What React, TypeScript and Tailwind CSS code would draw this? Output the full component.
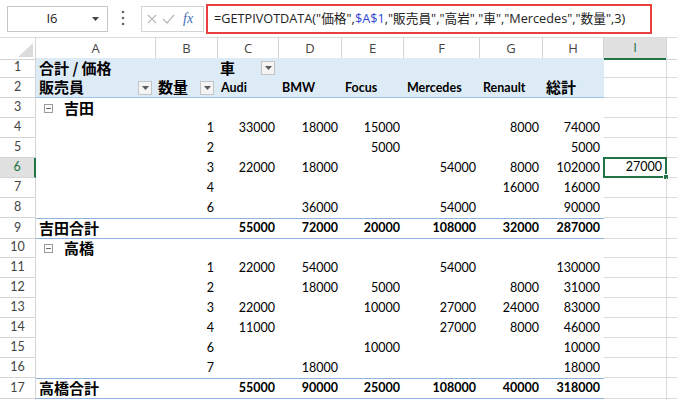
import React from 'react';

const GRID = 'grid grid-cols-[36px_120px_62px_61px_63px_62px_76px_63px_61px_63px_10px]';
const CJK = "relative -top-[1px] text-[15px] font-bold font-['Noto_Sans_CJK_JP',sans-serif] leading-none";

type Row = {
  n: number;
  kind: 'h1' | 'h2' | 'group' | 'data' | 'total';
  a?: string;
  b?: string;
  vals?: string[];
  i?: string;
};

const rows: Row[] = [
  { n: 1, kind: 'h1' },
  { n: 2, kind: 'h2' },
  { n: 3, kind: 'group', a: '吉田' },
  { n: 4, kind: 'data', b: '1', vals: ['33000', '18000', '15000', '', '8000', '74000'] },
  { n: 5, kind: 'data', b: '2', vals: ['', '', '5000', '', '', '5000'] },
  { n: 6, kind: 'data', b: '3', vals: ['22000', '18000', '', '54000', '8000', '102000'], i: '27000' },
  { n: 7, kind: 'data', b: '4', vals: ['', '', '', '', '16000', '16000'] },
  { n: 8, kind: 'data', b: '6', vals: ['', '36000', '', '54000', '', '90000'] },
  { n: 9, kind: 'total', a: '吉田合計', vals: ['55000', '72000', '20000', '108000', '32000', '287000'] },
  { n: 10, kind: 'group', a: '高橋' },
  { n: 11, kind: 'data', b: '1', vals: ['22000', '54000', '', '54000', '', '130000'] },
  { n: 12, kind: 'data', b: '2', vals: ['', '18000', '5000', '', '8000', '31000'] },
  { n: 13, kind: 'data', b: '3', vals: ['22000', '', '10000', '27000', '24000', '83000'] },
  { n: 14, kind: 'data', b: '4', vals: ['11000', '', '', '27000', '8000', '46000'] },
  { n: 15, kind: 'data', b: '6', vals: ['', '', '10000', '', '', '10000'] },
  { n: 16, kind: 'data', b: '7', vals: ['', '18000', '', '', '', '18000'] },
  { n: 17, kind: 'total', a: '高橋合計', vals: ['55000', '90000', '25000', '108000', '40000', '318000'] },
  { n: 18, kind: 'data' },
];

const Dropdown = () => (
  <span className="w-[14px] h-[14px] shrink-0 border border-[#c4c4c4] bg-[#f4f4f4] flex items-center justify-center">
    <svg width="7" height="4" viewBox="0 0 7 4">
      <path d="M0 0h7L3.5 4z" fill="#5a5a5a" />
    </svg>
  </span>
);

const Collapse = () => (
  <span className="w-[9px] h-[9px] shrink-0 border border-[#9a9a9a] flex items-center justify-center">
    <span className="w-[5px] h-px bg-[#666]" />
  </span>
);

function RowNum({ n }: { n: number }) {
  if (n === 6)
    return (
      <div className="flex items-center justify-center bg-[#e1e1e1] text-[#217346] border-b border-b-[#d4d4d4] border-r-2 border-r-[#217346]">
        {n}
      </div>
    );
  return (
    <div className="flex items-center justify-center text-[#444] border-b border-r border-[#d4d4d4]">
      {n <= 17 ? n : ''}
    </div>
  );
}

function PivotCell({ row, children, right }: { row: Row; children?: React.ReactNode; right?: boolean }) {
  let cls = 'flex items-center whitespace-nowrap ';
  cls += right ? 'justify-end pr-[4px] ' : 'pl-[3px] ';
  if (row.kind === 'h1') cls += 'bg-[#ddebf7] ';
  if (row.kind === 'h2') cls += 'bg-[#ddebf7] border-b border-[#9bc2e6] ';
  if (row.kind === 'total') cls += 'border-y border-[#8db3e2] font-bold ';
  if (row.kind === 'h1' || row.kind === 'h2') cls += 'font-bold ';
  return <div className={cls}>{children}</div>;
}

function SheetRow({ row }: { row: Row }) {
  const isPivot = row.n <= 17;
  const cells: React.ReactNode[] = [];
  if (isPivot) {
    if (row.kind === 'h1') {
      cells.push(
        <PivotCell key="a" row={row}>
          <span className={CJK}>合計 / 価格</span>
        </PivotCell>
      );
      cells.push(<PivotCell key="b" row={row} />);
      cells.push(
        <div key="c" className="flex items-center justify-between pl-[2px] pr-[4px] bg-[#ddebf7]">
          <span className={CJK}>車</span>
          <Dropdown />
        </div>
      );
      for (let k = 0; k < 5; k++) cells.push(<PivotCell key={'x' + k} row={row} />);
    } else if (row.kind === 'h2') {
      cells.push(
        <div key="a" className="flex items-center justify-between pl-[3px] pr-[4px] bg-[#ddebf7] border-b border-[#9bc2e6]">
          <span className={CJK}>販売員</span>
          <Dropdown />
        </div>
      );
      cells.push(
        <div key="b" className="flex items-center justify-between pl-[2px] pr-[4px] bg-[#ddebf7] border-b border-[#9bc2e6]">
          <span className={CJK}>数量</span>
          <Dropdown />
        </div>
      );
      ['Audi', 'BMW', 'Focus', 'Mercedes', 'Renault'].forEach((t) =>
        cells.push(
          <PivotCell key={t} row={row}>
            <span className="relative top-[1px]">{t}</span>
          </PivotCell>
        )
      );
      cells.push(
        <PivotCell key="tot" row={row}>
          <span className={CJK}>総計</span>
        </PivotCell>
      );
    } else if (row.kind === 'group') {
      cells.push(
        <div key="a" className="flex items-center pl-[8px] gap-[11px] whitespace-nowrap">
          <Collapse />
          <span className={CJK}>{row.a}</span>
        </div>
      );
      for (let k = 0; k < 7; k++) cells.push(<div key={'g' + k} />);
    } else if (row.kind === 'total') {
      cells.push(
        <PivotCell key="a" row={row}>
          <span className={CJK}>{row.a}</span>
        </PivotCell>
      );
      cells.push(<PivotCell key="b" row={row} />);
      row.vals!.forEach((v, k) =>
        cells.push(
          <PivotCell key={'v' + k} row={row} right>
            {v}
          </PivotCell>
        )
      );
    } else {
      cells.push(<div key="a" />);
      cells.push(
        <PivotCell key="b" row={row} right>
          {row.b}
        </PivotCell>
      );
      row.vals!.forEach((v, k) =>
        cells.push(
          <PivotCell key={'v' + k} row={row} right>
            {v}
          </PivotCell>
        )
      );
    }
  } else {
    for (let k = 0; k < 8; k++) cells.push(<div key={'e' + k} className="border-b border-[#dadada]" />);
  }

  const sel = row.n === 6;
  return (
    <div className={GRID + ' h-[20px]'}>
      <RowNum n={row.n} />
      {cells}
      <div className="relative flex items-center justify-end pr-[4px] border-b border-r border-[#dadada]">
        {row.i}
        {sel && (
          <>
            <div className="absolute -left-[1px] -top-[1px] right-[-1px] bottom-[-1px] border-2 border-[#217346]" />
            <div className="absolute right-[-3px] bottom-[-3px] w-[6px] h-[6px] bg-[#217346] border border-white" />
          </>
        )}
      </div>
      <div className="border-b border-[#dadada]" />
    </div>
  );
}

function FormulaBar() {
  return (
    <div className="relative flex items-center h-[37px] bg-white font-['Open_Sans',sans-serif]">
      <div className="ml-[7px] w-[101px] h-[26px] border border-[#c6c6c6] flex items-center">
        <span className="flex-1 text-center text-[13px] text-[#222] pl-[4px]">I6</span>
        <svg width="7" height="4" viewBox="0 0 7 4" className="mr-[8px]">
          <path d="M0 0h7L3.5 4z" fill="#444" />
        </svg>
      </div>
      <svg width="4" height="18" viewBox="0 0 4 18" className="ml-[13px]">
        <circle cx="2" cy="2" r="1.3" fill="#666" />
        <circle cx="2" cy="8" r="1.3" fill="#666" />
        <circle cx="2" cy="14" r="1.3" fill="#666" />
      </svg>
      <div className="ml-[16px] w-[63px] h-[26px] border border-[#d4d4d4] flex items-center pl-[5px] gap-[4px]">
        <svg width="10" height="10" viewBox="0 0 10 10">
          <path d="M1 1l8 8M9 1l-8 8" stroke="#b9b9b9" strokeWidth="1.2" />
        </svg>
        <svg width="13" height="10" viewBox="0 0 13 10" className="ml-[1px]">
          <path d="M1 5l4 4L12 1" stroke="#b9b9b9" strokeWidth="1.2" fill="none" />
        </svg>
        <span className="ml-[4px] italic text-[14px] text-[#3f6fb5] font-['Liberation_Serif',serif] leading-none">fx</span>
      </div>
      <div className="ml-[2px] w-[446px] h-[30px] border-2 border-[#e8403f] flex items-center pl-[6px] text-[12.7px] text-[#222] whitespace-nowrap font-['Open_Sans','Noto_Sans_CJK_JP',sans-serif]">
        =GETPIVOTDATA("価格",<span className="text-[#2f45d8]">$A$1</span>,"販売員","高岩","車","Mercedes","数量",3)
      </div>
    </div>
  );
}

function ColHeaders() {
  const letters = ['A', 'B', 'C', 'D', 'E', 'F', 'G', 'H'];
  return (
    <div className={GRID + ' h-[21px] border-t border-[#dadada]'}>
      <div className="relative border-r border-b border-[#d4d4d4]">
        <svg width="15" height="14" viewBox="0 0 15 14" className="absolute right-[2px] bottom-[2px]">
          <path d="M15 0V14H0z" fill="#dcdcdc" />
        </svg>
      </div>
      {letters.map((l) => (
        <div key={l} className="flex items-center justify-center text-[#444] border-r border-b border-[#d4d4d4]">
          {l}
        </div>
      ))}
      <div className="flex items-center justify-center bg-[#e1e1e1] text-[#217346] border-r border-r-[#d4d4d4] border-b-2 border-b-[#217346]">
        I
      </div>
      <div className="border-b border-[#d4d4d4]" />
    </div>
  );
}

export default function App() {
  return (
    <div className="w-[677px] h-[400px] overflow-hidden bg-white text-[12.5px] text-black font-['Lato',sans-serif]">
      <FormulaBar />
      <div className="font-['Open_Sans',sans-serif] text-[13px]">
        <ColHeaders />
      </div>
      {rows.map((r) => (
        <SheetRow key={r.n} row={r} />
      ))}
    </div>
  );
}
